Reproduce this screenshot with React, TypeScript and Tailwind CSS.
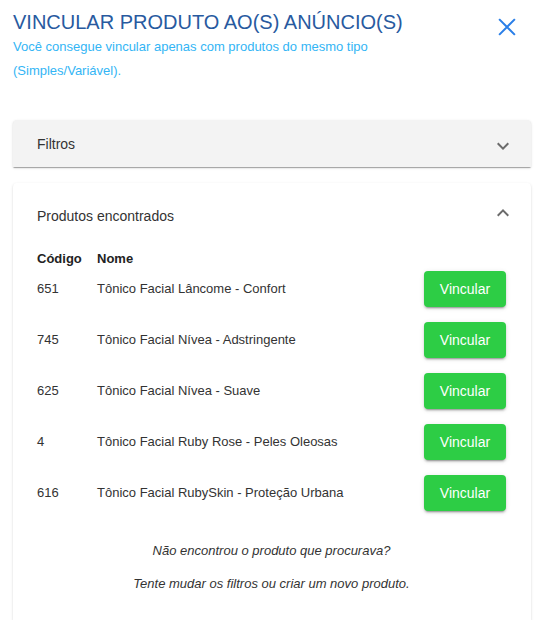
const produtos = [
  { codigo: "651", nome: "Tônico Facial Lâncome - Confort" },
  { codigo: "745", nome: "Tônico Facial Nívea - Adstringente" },
  { codigo: "625", nome: "Tônico Facial Nívea - Suave" },
  { codigo: "4", nome: "Tônico Facial Ruby Rose - Peles Oleosas" },
  { codigo: "616", nome: "Tônico Facial RubySkin - Proteção Urbana" },
];

function Chevron({ up }: { up?: boolean }) {
  return (
    <svg viewBox="0 0 24 24" className={`w-6 h-6 fill-[#6b6b6b] ${up ? "rotate-180" : ""}`}>
      <path d="M16.59 8.59L12 13.17 7.41 8.59 6 10l6 6 6-6z" />
    </svg>
  );
}

export default function App() {
  return (
    <div className="w-[540px] h-[620px] overflow-hidden bg-white [font-family:'Liberation_Sans',Arial,sans-serif] text-[#333]">
      {/* Header */}
      <div className="flex items-start justify-between pl-[13px] pr-[24px] pt-[10px]">
        <div>
          <h1 className="text-[20px] leading-[24px] text-[#285a9f]">VINCULAR PRODUTO AO(S) ANÚNCIO(S)</h1>
          <p className="text-[13px] leading-[24px] text-[#33b5f5] mt-[1px]">
            Você consegue vincular apenas com produtos do mesmo tipo
            <br />
            (Simples/Variável).
          </p>
        </div>
        <button className="mt-[8px] text-[#2a7fe8]">
          <svg viewBox="0 0 16 16" className="w-[18px] h-[18px]" fill="none" stroke="currentColor" strokeWidth="1.8">
            <path d="M1 1l14 14M15 1L1 15" />
          </svg>
        </button>
      </div>

      <div className="pl-[13px] pr-[9px] mt-[37px] flex flex-col gap-[16px]">
        {/* Filtros */}
        <div className="h-[47px] bg-[#f3f3f3] rounded-t-[4px] shadow-[0_2px_1px_-1px_rgba(0,0,0,0.2),0_1px_1px_0_rgba(0,0,0,0.14),0_1px_3px_0_rgba(0,0,0,0.12)] flex items-center justify-between pl-[24px] pr-[16px]">
          <span className="text-[14px] mt-[2px]">Filtros</span>
          <span className="mt-[4px]">
            <Chevron />
          </span>
        </div>

        {/* Produtos */}
        <div className="bg-white rounded-[4px] shadow-[0_2px_1px_-1px_rgba(0,0,0,0.2),0_1px_1px_0_rgba(0,0,0,0.14),0_1px_3px_0_rgba(0,0,0,0.12)] pl-[24px] pr-[25px] pb-[30px]">
          <div className="h-[66px] flex items-center justify-between">
            <span className="text-[14px] mt-[1px]">Produtos encontrados</span>
            <span className="-mr-[9px] -mt-[6px]">
              <Chevron up />
            </span>
          </div>

          <div className="h-[20px] flex items-center text-[13px] font-bold text-[#222]">
            <span className="w-[60px]">Código</span>
            <span>Nome</span>
          </div>

          <div className="mt-[2px] flex flex-col gap-[15px]">
            {produtos.map((p) => (
              <div key={p.codigo} className="h-[36px] flex items-center text-[13px]">
                <span className="w-[60px]">{p.codigo}</span>
                <span className="flex-1">{p.nome}</span>
                <button className="w-[82px] h-[36px] rounded-[4px] bg-[#2dcd45] text-white text-[14px] shadow-[0_3px_1px_-2px_rgba(0,0,0,0.2),0_2px_2px_0_rgba(0,0,0,0.14),0_1px_5px_0_rgba(0,0,0,0.12)]">
                  Vincular
                </button>
              </div>
            ))}
          </div>

          <div className="mt-[30px] flex flex-col items-center gap-[13px] text-[13px] italic leading-[20px]">
            <p>Não encontrou o produto que procurava?</p>
            <p>Tente mudar os filtros ou criar um novo produto.</p>
          </div>
        </div>
      </div>
    </div>
  );
}
